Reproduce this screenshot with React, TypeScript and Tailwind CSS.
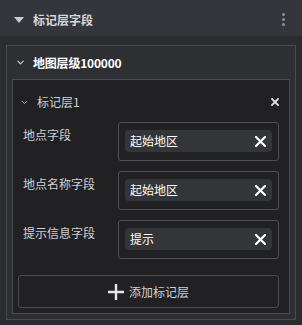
import { ChevronDown } from "lucide-react";

const fields = [
    { label: "地点字段", value: "起始地区" },
    { label: "地点名称字段", value: "起始地区" },
    { label: "提示信息字段", value: "提示" },
];

function Cross({ size, stroke, color }: { size: number; stroke: number; color: string }) {
    return (
        <svg width={size} height={size} viewBox={`0 0 ${size} ${size}`}>
            <path d={`M1 1 L${size - 1} ${size - 1} M${size - 1} 1 L1 ${size - 1}`} stroke={color} strokeWidth={stroke} strokeLinecap="square" />
        </svg>
    );
}

function FieldRow({ label, value }: { label: string; value: string }) {
    return (
        <div className="flex items-start">
            <div className="w-[105px] pl-[10px] pt-[1px] text-[12px] leading-[24px] text-[#cfd0d2]">{label}</div>
            <div className="w-[161px] h-[39px] border border-[#505155] rounded-[3px] px-[6px] pt-[7px]">
                <div className="h-[22px] bg-[#343538] rounded-[4px] flex items-center justify-between pl-[5px] pr-[6px]">
                    <span className="text-[12px] text-white">{value}</span>
                    <Cross size={11} stroke={2.2} color="#ffffff" />
                </div>
            </div>
        </div>
    );
}

export default function App() {
    return (
        <div
            className="w-[302px] h-[325px] bg-[#2b2c30] overflow-hidden"
            style={{ fontFamily: '"Noto Sans CJK SC", "Liberation Sans", sans-serif' }}
        >
            {/* Panel header */}
            <div className="h-[36px] bg-[#35363b] flex items-center pl-[14px] pr-[17px] pt-[3px]">
                <svg width="10" height="6" viewBox="0 0 10 6">
                    <path d="M0 0 L10 0 L5 6 Z" fill="#c9cacd" />
                </svg>
                <span className="ml-[9px] text-[12px] font-bold text-[#d6d7d9]">标记层字段</span>
                <div className="ml-auto flex flex-col gap-[2px]">
                    <span className="w-[3px] h-[3px] rounded-full bg-[#8c8d90]" />
                    <span className="w-[3px] h-[3px] rounded-full bg-[#8c8d90]" />
                    <span className="w-[3px] h-[3px] rounded-full bg-[#8c8d90]" />
                </div>
            </div>

            <div className="px-[6px] pt-[9px]">
                <div className="border border-[#4b4c50] bg-[#2e2f33] pb-[5px]">
                    {/* Map level header */}
                    <div className="h-[33px] flex items-center pl-[8px]">
                        <ChevronDown className="w-[11px] h-[11px] text-[#c9cacd]" strokeWidth={2.5} />
                        <span className="ml-[7px] text-[12px] font-bold text-white tracking-[-0.2px]">地图层级100000</span>
                    </div>

                    <div className="mx-[5px] border border-[#4b4c50] bg-[#212124] pb-[5px]">
                        {/* Marker layer header */}
                        <div className="h-[24px] mt-[10px] flex items-center pl-[7px] pr-[10px]">
                            <ChevronDown className="w-[9px] h-[9px] text-[#b8b9bc]" strokeWidth={2.5} />
                            <span className="ml-[8px] text-[12px] text-[#d0d1d3]">标记层1</span>
                            <span className="ml-auto">
                                <Cross size={8} stroke={1.8} color="#e0e0e0" />
                            </span>
                        </div>

                        <div className="mt-[8px] flex flex-col gap-[10px]">
                            {fields.map((f) => (
                                <FieldRow key={f.label} label={f.label} value={f.value} />
                            ))}
                        </div>

                        <button className="mt-[16px] ml-[5px] w-[261px] h-[33px] border border-[#4b4c50] rounded-[3px] flex items-center justify-center gap-[5px] text-[12px] text-[#d0d1d3]">
                            <svg width="16" height="16" viewBox="0 0 16 16">
                                <path d="M8 0 V16 M0 8 H16" stroke="#e6e6e6" strokeWidth="2.4" />
                            </svg>
                            添加标记层
                        </button>
                    </div>
                </div>
            </div>
        </div>
    );
}
